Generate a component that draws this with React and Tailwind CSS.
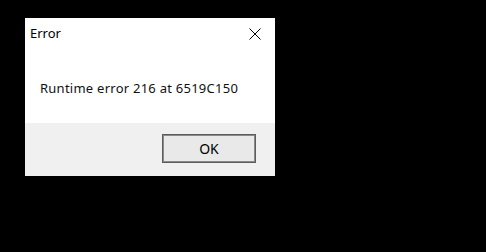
import React from 'react';

const font = { fontFamily: '"Segoe UI", "Noto Sans", "Open Sans", sans-serif' };

function CloseIcon() {
    return (
        <svg width="12" height="12" viewBox="0 0 12 12" className="block">
            <path d="M0.5 0.5 L11.5 11.5 M11.5 0.5 L0.5 11.5" stroke="#000" strokeWidth="1" fill="none" />
        </svg>
    );
}

export default function App() {
    return (
        <div className="w-[486px] h-[252px] bg-black pl-[25px] pt-[18px]" style={font}>
            <div className="w-[250px] h-[158px] flex flex-col bg-white">
                {/* Title bar */}
                <div className="h-[31px] flex items-center justify-between pl-[5px] pr-[14px]">
                    <span className="text-[13px] text-black leading-none">Error</span>
                    <CloseIcon />
                </div>

                {/* Message */}
                <div className="h-[74px] flex items-center pl-[15px] pt-[4px]">
                    <span className="text-[13px] tracking-[0.25px] text-[#111] leading-none">Runtime error 216 at 6519C150</span>
                </div>

                {/* Footer */}
                <div className="flex-1 bg-[#f0f0f0] flex justify-end items-start pt-[11px] pr-[19px]">
                    <button className="w-[94px] h-[29px] border border-[#5c5c5c] bg-[#e9e9e9] p-0">
                        <div className="w-full h-full border border-[#8a8a8a] flex items-center justify-center">
                            <span className="text-[14px] text-black leading-none">OK</span>
                        </div>
                    </button>
                </div>
            </div>
        </div>
    );
}
